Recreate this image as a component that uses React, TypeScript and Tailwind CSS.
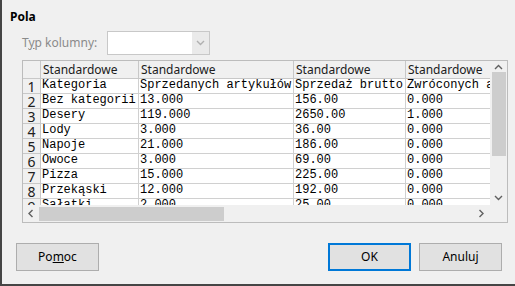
import React from "react";

const rows: [string, string, string, string][] = [
  ["Kategoria", "Sprzedanych artykułów", "Sprzedaż brutto", "Zwróconych artykułów"],
  ["Bez kategorii", "13.000", "156.00", "0.000"],
  ["Desery", "119.000", "2650.00", "1.000"],
  ["Lody", "3.000", "36.00", "0.000"],
  ["Napoje", "21.000", "186.00", "0.000"],
  ["Owoce", "3.000", "69.00", "0.000"],
  ["Pizza", "15.000", "225.00", "0.000"],
  ["Przekąski", "12.000", "192.00", "0.000"],
  ["Sałatki", "2.000", "25.00", "0.000"],
];

const Chev = ({ dir, color = "#606060" }: { dir: "up" | "down" | "left" | "right"; color?: string }) => {
  const pts =
    dir === "up"
      ? "1,5 4.5,1.5 8,5"
      : dir === "down"
      ? "1,2 4.5,5.5 8,2"
      : dir === "left"
      ? "5.5,1 2,4.5 5.5,8"
      : "2.5,1 6,4.5 2.5,8";
  return (
    <svg width="9" height="9" viewBox="0 0 9 9">
      <polyline points={pts} fill="none" stroke={color} strokeWidth="1.4" />
    </svg>
  );
};

const sans = { fontFamily: '"Noto Sans", "Open Sans", sans-serif' };
const mono = { fontFamily: '"Liberation Mono", monospace' };

export default function App() {
  const colW = ["w-[98px]", "w-[155px]", "w-[112px]", "w-[160px]"];
  return (
    <div
      className="w-[515px] h-[286px] bg-[#f0f0f0] border-l-2 border-b-2 border-[#454545] flex flex-col text-black overflow-hidden"
      style={sans}
    >
      <div className="mt-[9px] ml-[8px] h-[16px] leading-[16px] text-[12px] font-bold">Pola</div>

      <div className="mt-[6px] flex items-center h-[24px]">
        <div className="ml-[20px] w-[85px] text-[12px] text-[#8a8a8a]">
          T<span className="underline">y</span>p kolumny:
        </div>
        <div className="w-[103px] h-[24px] border border-[#c8c8c8] bg-white flex">
          <div className="flex-1" />
          <div className="w-[17px] h-full bg-[#eaeaea] flex items-center justify-center">
            <Chev dir="down" color="#b0b0b0" />
          </div>
        </div>
      </div>

      <div className="mt-[5px] ml-[20px] w-[486px] h-[163px] border border-[#bcbcbc] flex flex-col bg-[#f0f0f0]">
        <div className="flex h-[144px]">
          <div className="w-[467px] h-full overflow-hidden bg-white">
            <div className="flex h-[18px] w-max">
              <div className="w-[18px] shrink-0 bg-[#f0f0f0] border-r border-b border-[#c8c8c8]" />
              {colW.map((w, i) => (
                <div
                  key={i}
                  className={`${w} shrink-0 bg-[#f0f0f0] border-r border-b border-[#c8c8c8] text-[12px] leading-[17px] pl-[2px] text-[#202020]`}
                >
                  Standardowe
                </div>
              ))}
            </div>
            {rows.map((r, ri) => (
              <div key={ri} className="flex h-[15px] w-max">
                <div
                  className="w-[18px] shrink-0 bg-[#f0f0f0] border-r border-b border-[#c8c8c8] text-[14px] leading-[16px] text-center text-[#202020]"
                >
                  {ri + 1}
                </div>
                {r.map((c, ci) => (
                  <div
                    key={ci}
                    className={`${colW[ci]} shrink-0 border-r border-b border-[#d0d0d0] text-[12px] leading-[13px] pl-[1px] whitespace-nowrap overflow-hidden`}
                    style={mono}
                  >
                    {c}
                  </div>
                ))}
              </div>
            ))}
          </div>
          <div className="w-[17px] h-full flex flex-col items-center bg-[#f0f0f0]">
            <div className="h-[12px] flex items-center justify-center mt-[1px]">
              <Chev dir="up" />
            </div>
            <div className="mt-[-2px] w-[14px] h-[84px] bg-[#cdcdcd]" />
            <div className="flex-1" />
            <div className="h-[14px] flex items-center justify-center">
              <Chev dir="down" />
            </div>
          </div>
        </div>
        <div className="flex h-[17px]">
          <div className="w-[467px] h-full flex items-center">
            <div className="w-[16px] flex items-center justify-center">
              <Chev dir="left" />
            </div>
            <div className="w-[185px] h-[14px] bg-[#cdcdcd]" />
            <div className="flex-1" />
            <div className="w-[17px] flex items-center justify-center">
              <Chev dir="right" />
            </div>
          </div>
          <div className="w-[17px] h-full" />
        </div>
      </div>

      <div className="mt-[20px] flex h-[28px] text-[12px]">
        <button className="ml-[14px] w-[83px] h-[28px] bg-[#e1e1e1] border border-[#adadad]">
          Po<span className="underline">m</span>oc
        </button>
        <div className="flex-1" />
        <button className="w-[83px] h-[28px] bg-[#e1e1e1] border-2 border-[#0078d7]">OK</button>
        <button className="ml-[8px] mr-[13px] w-[83px] h-[28px] bg-[#e1e1e1] border border-[#adadad]">
          Anuluj
        </button>
      </div>
    </div>
  );
}
